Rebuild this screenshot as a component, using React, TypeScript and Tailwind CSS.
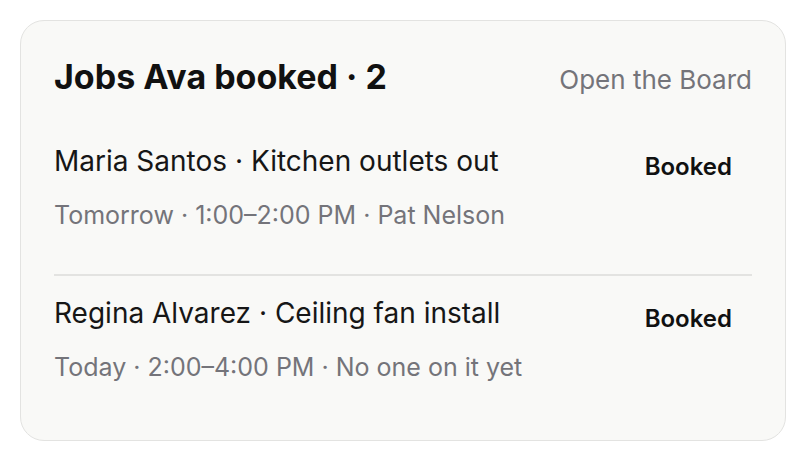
import React from 'react';

type Job = {
    customer: string;
    issue: string;
    when: string;
    tech: string;
    status: string;
};

const jobs: Job[] = [
    { customer: 'Maria Santos', issue: 'Kitchen outlets out', when: 'Tomorrow · 1:00–2:00 PM', tech: 'Pat Nelson', status: 'Booked' },
    { customer: 'Regina Alvarez', issue: 'Ceiling fan install', when: 'Today · 2:00–4:00 PM', tech: 'No one on it yet', status: 'Booked' },
];

export default function App() {
    return (
        <div className="min-h-screen bg-white p-5" style={{ fontFamily: 'Inter, "Noto Sans", sans-serif' }}>
            <div className="rounded-3xl border-[1.5px] border-[#e3e3e1] bg-[#f9f9f7] px-[33px] pt-[36px] pb-[58px]">
                <div className="flex items-baseline justify-between">
                    <h2 className="text-[34px] leading-[40px] font-bold text-[#111111]">Jobs Ava booked · {jobs.length}</h2>
                    <a className="text-[26px] leading-[32px] text-[#74747a]">Open the Board</a>
                </div>

                <div className="mt-[47px]">
                    {jobs.map((job, i) => (
                        <div key={job.customer}>
                            {i > 0 && <div className="h-[1.5px] bg-[#e3e3e1] mt-[44px] mb-[20px]" />}
                            <JobRow job={job} />
                        </div>
                    ))}
                </div>
            </div>
        </div>
    );
}

function JobRow({ job }: { job: Job }) {
    return (
        <div className="flex items-start justify-between">
            <div>
                <div className="text-[28px] leading-[34px] text-[#161616]">
                    {job.customer} · {job.issue}
                </div>
                <div className="mt-[22px] text-[25px] leading-[30px] text-[#74747a]">
                    {job.when} · {job.tech}
                </div>
            </div>
            <span className="mt-[6px] pr-[20px] text-[24px] leading-[34px] font-semibold text-[#111111]">{job.status}</span>
        </div>
    );
}
